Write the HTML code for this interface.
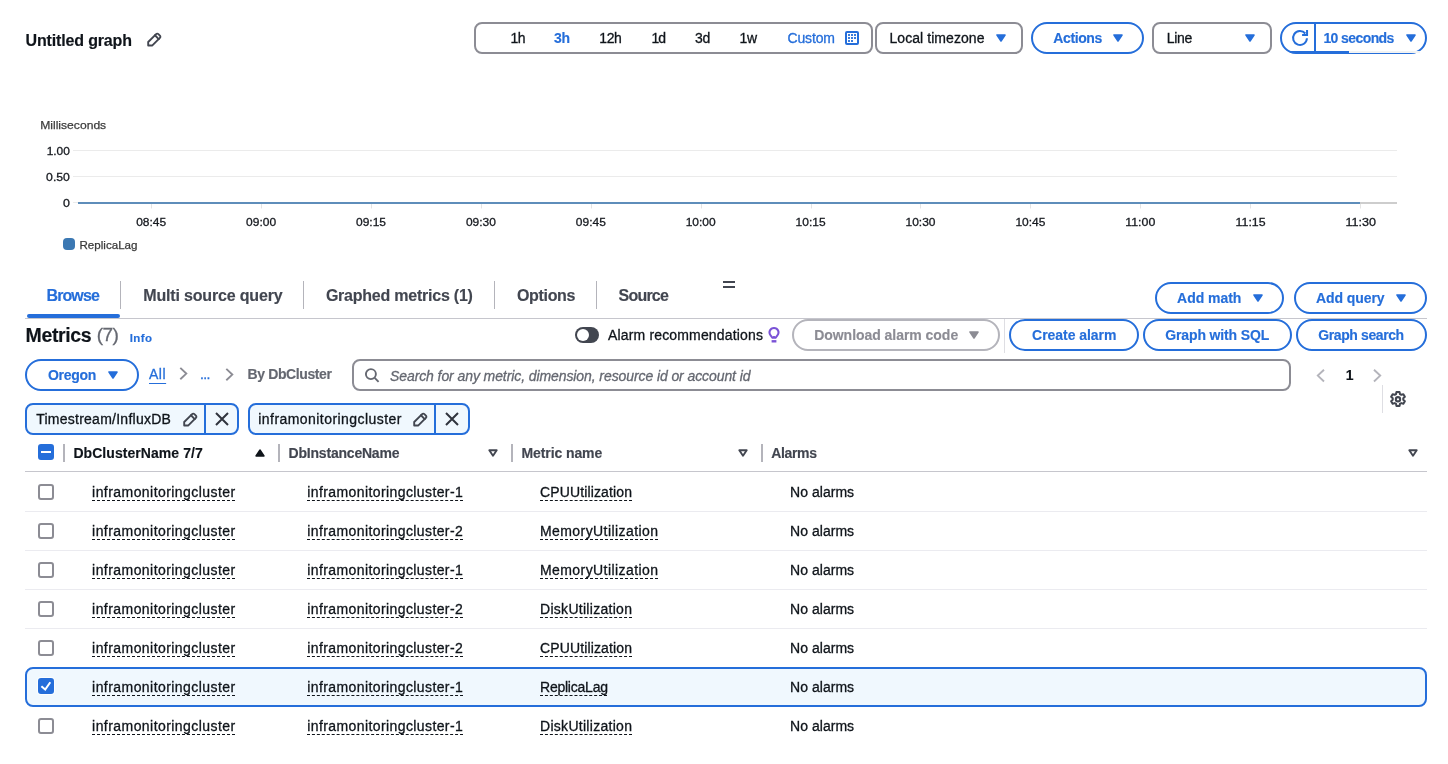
<!DOCTYPE html>
<html lang="en"><head>
<meta charset="utf-8">
<title>CloudWatch Metrics</title>
<style>
html,body{margin:0;padding:0}
body{width:1448px;height:764px;position:relative;overflow:hidden;background:#fff;font-family:"Liberation Sans",sans-serif;font-size:14px;line-height:20px;color:#0f141a;will-change:transform}
.t{position:absolute;white-space:nowrap;margin:0;padding:0;-webkit-text-stroke:0.3px currentColor}
.t.b{-webkit-text-stroke:0.15px currentColor}
.b{font-weight:700}
.blue{color:#256eda}
.g{color:#424650}
.g2{color:#656871}
.box{position:absolute;box-sizing:border-box;border:2px solid #8c8c94;border-radius:8px;height:32px;background:#fff}
.pill{position:absolute;box-sizing:border-box;border:2px solid #256eda;border-radius:16px;height:32px;background:#fff}
.pill.dis{border-color:#b4b4bb}
.tok{position:absolute;box-sizing:border-box;border:2px solid #256eda;border-radius:8px;height:32px;background:#f0f8fe}
.vl{position:absolute;background:#b4b4bb}
.hl{position:absolute;height:1px;background:#ebebf0;left:25px;width:1402px}
.cb{position:absolute;box-sizing:border-box;width:16px;height:16px;left:38px;border:2px solid #8c8c94;border-radius:3px;background:#fff}
.cb.on{border-color:#256eda;background:#256eda}
.ic{position:absolute;overflow:visible}
.u{text-decoration:underline dashed;text-decoration-thickness:1px;text-underline-offset:3px}
</style>
</head>
<body>
<!-- HEADER -->
<header id="hdr">
<h1 class="t b" style="left: 25.5px; top: 31px; font-size: 16px; line-height: 20px; letter-spacing: -0.15px;">Untitled graph</h1>
<svg class="ic" style="left:146px;top:32px" width="16" height="16" viewBox="0 0 16 16" fill="none" stroke="#424650" stroke-width="1.9" stroke-linejoin="round" stroke-linecap="round"><path d="M2.2 13.45V10.04L10.115 2.125A1.6 1.6 0 0 1 12.378 2.125L13.905 3.652A1.6 1.6 0 0 1 13.905 5.915L6.37 13.45Z"></path><path d="M8.95 3.29l3.79 3.79"></path></svg>

<div class="box" style="left:474px;top:22px;width:399px"></div>
<span class="t" style="left: 510.5px; top: 28px; letter-spacing: -0.58px;">1h</span>
<span class="t b blue" style="left: 554px; top: 28px; letter-spacing: -0.34px;">3h</span>
<span class="t" style="left: 599.3px; top: 28px; letter-spacing: -0.43px;">12h</span>
<span class="t" style="left: 651.5px; top: 28px; letter-spacing: -1.08px;">1d</span>
<span class="t" style="left: 695px; top: 28px; letter-spacing: -0.38px;">3d</span>
<span class="t" style="left: 739.4px; top: 28px; letter-spacing: -0.21px;">1w</span>
<span class="t blue" style="left: 787.5px; top: 28px; letter-spacing: -0.15px;">Custom</span>
<svg class="ic" style="left:845px;top:31px" width="14" height="14" viewBox="0 0 14 14"><rect x="1" y="1" width="12" height="12" rx="1" fill="none" stroke="#256eda" stroke-width="2"></rect><g fill="#256eda"><rect x="3.05" y="3.05" width="1.9" height="1.9"></rect><rect x="6.05" y="3.05" width="1.9" height="1.9"></rect><rect x="9.05" y="3.05" width="1.9" height="1.9"></rect><rect x="3.05" y="6.05" width="1.9" height="1.9"></rect><rect x="6.05" y="6.05" width="1.9" height="1.9"></rect><rect x="9.05" y="6.05" width="1.9" height="1.9"></rect><rect x="3.05" y="9.05" width="1.9" height="1.9"></rect><rect x="6.05" y="9.05" width="1.9" height="1.9"></rect></g></svg>

<div class="box" style="left:875px;top:22px;width:148px"></div>
<span class="t" style="left: 889.5px; top: 28px; letter-spacing: 0.06px;">Local timezone</span>
<svg class="ic car" style="left:996px;top:34px" width="10" height="8" viewBox="0 0 10 8"><path d="M1 1h8L5 7z" fill="#256eda" stroke="#256eda" stroke-width="1.6" stroke-linejoin="round"></path></svg>

<div class="pill" style="left:1031px;top:22px;width:113px"></div>
<span class="t b blue" style="left: 1053.3px; top: 28px; letter-spacing: -0.39px;">Actions</span>
<svg class="ic car" style="left:1113px;top:34px" width="10" height="8" viewBox="0 0 10 8"><path d="M1 1h8L5 7z" fill="#256eda" stroke="#256eda" stroke-width="1.6" stroke-linejoin="round"></path></svg>

<div class="box" style="left:1152px;top:22px;width:120px"></div>
<span class="t" style="left: 1166.8px; top: 28px; letter-spacing: -0.32px;">Line</span>
<svg class="ic car" style="left:1245px;top:34px" width="10" height="8" viewBox="0 0 10 8"><path d="M1 1h8L5 7z" fill="#256eda" stroke="#256eda" stroke-width="1.6" stroke-linejoin="round"></path></svg>

<div class="pill" style="left:1280px;top:22px;width:147px"></div>
<div style="position:absolute;left:1290px;top:51px;width:130px;height:2px;background:linear-gradient(to right,#256eda 0,#256eda 59px,#f2f3f3 59px,#f2f3f3 100%)"></div>
<div class="vl" style="left:1314px;top:23px;width:2px;height:30px;background:#256eda"></div>
<svg class="ic" style="left:1292px;top:30px" width="16" height="16" viewBox="0 0 16 16" fill="none" stroke="#256eda" stroke-width="2" stroke-linejoin="round" stroke-linecap="butt"><path d="M14.95 8.3A6.95 6.95 0 1 1 13.3 3.5"></path><path d="M15.05 0.1V4.97H10.1" stroke-linejoin="miter"></path></svg>
<span class="t b blue" style="left: 1323.4px; top: 28px; letter-spacing: -0.59px;">10 seconds</span>
<svg class="ic car" style="left:1406px;top:34px" width="10" height="8" viewBox="0 0 10 8"><path d="M1 1h8L5 7z" fill="#256eda" stroke="#256eda" stroke-width="1.6" stroke-linejoin="round"></path></svg>
</header>

<!-- CHART -->
<svg class="ic" id="chart" style="left:0;top:100px" width="1448" height="160" viewBox="0 100 1448 160" font-family="Liberation Sans, sans-serif" font-size="11.5">
<g stroke="#ebebeb" stroke-width="1"><path d="M73 150.5H1397M73 176.5H1397M73 202.5H1397"></path></g>
<g stroke="#e4e4e4" stroke-width="1"><path d="M151.5 204v4.5M261.5 204v4.5M371.5 204v4.5M481.5 204v4.5M591.5 204v4.5M701.5 204v4.5M811.5 204v4.5M920.5 204v4.5M1030.5 204v4.5M1140.5 204v4.5M1250.5 204v4.5M1360.5 204v4.5"></path></g>
<path d="M1360 203H1397" stroke="#cdcdcd" stroke-width="2"></path>
<path d="M78 203H1360" stroke="#5e8dba" stroke-width="2"></path>
<text x="40.2" y="129" fill="#3c3c3c" stroke="#3c3c3c" stroke-width="0.25" textLength="66" lengthAdjust="spacingAndGlyphs">Milliseconds</text>
<g fill="#16191f" stroke="#16191f" stroke-width="0.3">
<text x="46.7" y="155.3" textLength="23.2" lengthAdjust="spacingAndGlyphs">1.00</text>
<text x="46.1" y="181.3" textLength="23.8" lengthAdjust="spacingAndGlyphs">0.50</text>
<text x="63" y="206.8" textLength="6.9" lengthAdjust="spacingAndGlyphs">0</text>
<text x="136.2" y="226" textLength="30" lengthAdjust="spacingAndGlyphs">08:45</text>
<text x="246.1" y="226" textLength="30" lengthAdjust="spacingAndGlyphs">09:00</text>
<text x="356" y="226" textLength="30" lengthAdjust="spacingAndGlyphs">09:15</text>
<text x="465.9" y="226" textLength="30" lengthAdjust="spacingAndGlyphs">09:30</text>
<text x="575.8" y="226" textLength="30" lengthAdjust="spacingAndGlyphs">09:45</text>
<text x="685.7" y="226" textLength="30" lengthAdjust="spacingAndGlyphs">10:00</text>
<text x="795.6" y="226" textLength="30" lengthAdjust="spacingAndGlyphs">10:15</text>
<text x="905.5" y="226" textLength="30" lengthAdjust="spacingAndGlyphs">10:30</text>
<text x="1015.4" y="226" textLength="30" lengthAdjust="spacingAndGlyphs">10:45</text>
<text x="1125.3" y="226" textLength="30" lengthAdjust="spacingAndGlyphs">11:00</text>
<text x="1235.6" y="226" textLength="30" lengthAdjust="spacingAndGlyphs">11:15</text>
<text x="1345.5" y="226" textLength="30.5" lengthAdjust="spacingAndGlyphs">11:30</text>
</g>
<rect x="63" y="238" width="12" height="12" rx="4" fill="#3b78b3"></rect>
<text x="79.5" y="248.7" fill="#3a3a3a" stroke="#3a3a3a" stroke-width="0.25" textLength="58" lengthAdjust="spacingAndGlyphs">ReplicaLag</text>
</svg>

<!-- TABS -->
<nav id="tabs">
<div class="hl" style="top:318px;background:#c6c6cd"></div>
<div style="position:absolute;left:27px;top:314px;width:93px;height:4px;border-radius:2px;background:#256eda"></div>
<span class="t b blue" style="left: 46.5px; top: 286px; font-size: 16px; letter-spacing: -0.9px;">Browse</span>
<div class="vl" style="left:120px;top:281px;width:1px;height:28px"></div>
<span class="t b g" style="left: 143.3px; top: 286px; font-size: 16px; letter-spacing: -0.17px;">Multi source query</span>
<div class="vl" style="left:303px;top:281px;width:1px;height:28px"></div>
<span class="t b g" style="left: 325.9px; top: 286px; font-size: 16px; letter-spacing: -0.23px;">Graphed metrics (1)</span>
<div class="vl" style="left:494px;top:281px;width:1px;height:28px"></div>
<span class="t b g" style="left: 516.9px; top: 286px; font-size: 16px; letter-spacing: -0.31px;">Options</span>
<div class="vl" style="left:596px;top:281px;width:1px;height:28px"></div>
<span class="t b g" style="left: 618.6px; top: 286px; font-size: 16px; letter-spacing: -0.81px;">Source</span>
<div style="position:absolute;left:723px;top:281px;width:12px;height:2px;background:#424650"></div>
<div style="position:absolute;left:723px;top:286px;width:12px;height:2px;background:#424650"></div>

<div class="pill" style="left:1155px;top:282px;width:129px"></div>
<span class="t b blue" style="left: 1177.1px; top: 288px; letter-spacing: -0.04px;">Add math</span>
<svg class="ic car" style="left:1253px;top:294px" width="10" height="8" viewBox="0 0 10 8"><path d="M1 1h8L5 7z" fill="#256eda" stroke="#256eda" stroke-width="1.6" stroke-linejoin="round"></path></svg>
<div class="pill" style="left:1294px;top:282px;width:133px"></div>
<span class="t b blue" style="left: 1316.1px; top: 288px; letter-spacing: -0.09px;">Add query</span>
<svg class="ic car" style="left:1396px;top:294px" width="10" height="8" viewBox="0 0 10 8"><path d="M1 1h8L5 7z" fill="#256eda" stroke="#256eda" stroke-width="1.6" stroke-linejoin="round"></path></svg>
</nav>

<!-- METRICS HEADER -->
<section id="mh">
<h2 class="t b" style="left: 25.6px; top: 324px; font-size: 19.5px; line-height: 22px; letter-spacing: -0.38px;">Metrics</h2>
<span class="t g2" style="left: 96.8px; top: 324px; font-size: 19px; line-height: 22px; letter-spacing: -0.62px;">(7)</span>
<span class="t b blue" style="left: 129.8px; top: 329px; font-size: 11.5px; line-height: 18px; letter-spacing: 0.37px;">Info</span>
<div style="position:absolute;left:575px;top:327px;width:24px;height:16px;border-radius:8px;background:#424650"><div style="position:absolute;left:2px;top:2px;width:12px;height:12px;border-radius:6px;background:#fff"></div></div>
<span class="t" style="left: 608px; top: 325px; letter-spacing: 0.16px;">Alarm recommendations</span>
<svg class="ic" style="left:766px;top:325px" width="16" height="18" viewBox="0 0 16 18" fill="none" stroke="#7a52d6" stroke-width="2" stroke-linejoin="round"><path d="M8 2.9a4.5 4.5 0 0 1 3.4 7.45L9.5 12.8H6.5L4.6 10.35A4.5 4.5 0 0 1 8 2.9z"></path><path d="M6.9 11.9h2.2" stroke-width="1.6"></path><path d="M5.6 16.3h4.8" stroke-width="2.4"></path></svg>
<div class="pill dis" style="left:792px;top:319px;width:208px"></div>
<span class="t b" style="left: 814.2px; top: 325px; color: rgb(140, 140, 148); letter-spacing: -0.04px;">Download alarm code</span>
<svg class="ic car" style="left:969px;top:331px" width="10" height="8" viewBox="0 0 10 8"><path d="M1 1h8L5 7z" fill="#8c8c94" stroke="#8c8c94" stroke-width="1.6" stroke-linejoin="round"></path></svg>
<div class="vl" style="left:1004px;top:319px;width:1px;height:34px;background:#dedee3"></div>
<div class="pill" style="left:1009px;top:319px;width:130px"></div>
<span class="t b blue" style="left: 1032.1px; top: 325px; letter-spacing: -0.05px;">Create alarm</span>
<div class="pill" style="left:1143px;top:319px;width:149px"></div>
<span class="t b blue" style="left: 1165.3px; top: 325px; letter-spacing: -0.14px;">Graph with SQL</span>
<div class="pill" style="left:1296px;top:319px;width:131px"></div>
<span class="t b blue" style="left: 1318.3px; top: 325px; letter-spacing: -0.4px;">Graph search</span>
</section>

<!-- FILTER ROW -->
<section id="flt">
<div class="pill" style="left:25px;top:359px;width:114px"></div>
<span class="t b blue" style="left: 48px; top: 365px; letter-spacing: -0.32px;">Oregon</span>
<svg class="ic car" style="left:108px;top:371px" width="10" height="8" viewBox="0 0 10 8"><path d="M1 1h8L5 7z" fill="#256eda" stroke="#256eda" stroke-width="1.6" stroke-linejoin="round"></path></svg>
<span class="t blue" style="left: 149px; top: 364px; text-decoration: underline; text-underline-offset: 4px; letter-spacing: 0.52px;">All</span>
<svg class="ic" style="left:179.4px;top:367px" width="9" height="13" viewBox="0 0 9 13" fill="none" stroke="#8c8c94" stroke-width="1.9"><path d="M1.3 .9l6 5.7-6 5.7"></path></svg>
<span class="t blue" style="left: 200px; top: 364px; letter-spacing: -0.64px;">...</span>
<svg class="ic" style="left:224.6px;top:367.6px" width="9" height="13" viewBox="0 0 9 13" fill="none" stroke="#8c8c94" stroke-width="1.9"><path d="M1.3 .9l6 5.7-6 5.7"></path></svg>
<span class="t b g2" style="left: 247.6px; top: 364px; letter-spacing: -0.4px;">By DbCluster</span>
<div class="box" style="left:352px;top:359px;width:939px"></div>
<svg class="ic" style="left:364px;top:367px" width="16" height="16" viewBox="0 0 16 16" fill="none" stroke="#656871" stroke-width="1.9" stroke-linecap="butt"><circle cx="6.9" cy="7.1" r="5"></circle><path d="M10.7 10.9l3.9 3.9"></path></svg>
<span class="t g2" style="left: 390px; top: 366px; font-style: italic; letter-spacing: -0.09px;">Search for any metric, dimension, resource id or account id</span>
<svg class="ic" style="left:1316.3px;top:368.9px" width="9" height="13" viewBox="0 0 9 13" fill="none" stroke="#b4b4bb" stroke-width="1.9"><path d="M8 .7L1.8 6.6 8 12.5"></path></svg>
<span class="t b" style="left: 1345.7px; top: 365px; letter-spacing: -1.1px;">1</span>
<svg class="ic" style="left:1373px;top:368.7px" width="9" height="13" viewBox="0 0 9 13" fill="none" stroke="#b4b4bb" stroke-width="1.9"><path d="M1 .7l6.2 5.9L1 12.5"></path></svg>
<div class="vl" style="left:1382px;top:385px;width:1px;height:28px;background:#dedee3"></div>
<svg class="ic" style="left:1390px;top:391px" width="16" height="16" viewBox="0 0 16 16" fill="none" stroke="#424650" stroke-width="1.9" stroke-linejoin="round"><g transform="translate(8 8.3) scale(1.08) translate(-8 -8)"><path d="M6.6 1.2h2.8l.4 1.9 1.3.75 1.85-.6 1.4 2.4-1.45 1.3v1.5l1.45 1.3-1.4 2.4-1.85-.6-1.3.75-.4 1.9H6.6l-.4-1.9-1.3-.75-1.85.6-1.4-2.4 1.45-1.3v-1.5L1.65 5.65l1.4-2.4 1.85.6 1.3-.75z"></path><circle cx="8" cy="8" r="2"></circle></g></svg>

<div class="tok" style="left:25px;top:403px;width:214px"></div>
<span class="t" style="left: 36.2px; top: 409px; letter-spacing: 0.25px;">Timestream/InfluxDB</span>
<svg class="ic" style="left:182.1px;top:412.3px" width="16" height="16" viewBox="0 0 16 16" fill="none" stroke="#424650" stroke-width="1.9" stroke-linejoin="round" stroke-linecap="round"><path d="M2.2 13.45V10.04L10.115 2.125A1.6 1.6 0 0 1 12.378 2.125L13.905 3.652A1.6 1.6 0 0 1 13.905 5.915L6.37 13.45Z"></path><path d="M8.95 3.29l3.79 3.79"></path></svg>
<div class="vl" style="left:204px;top:404px;width:2px;height:30px;background:#256eda"></div>
<svg class="ic" style="left:215px;top:412.2px" width="14" height="14" viewBox="0 0 14 14" fill="none" stroke="#30343e" stroke-width="2"><path d="M1 1l12 12M13 1L1 13"></path></svg>

<div class="tok" style="left:248px;top:403px;width:222px"></div>
<span class="t" style="left: 258.3px; top: 409px; letter-spacing: 0.44px;">inframonitoringcluster</span>
<svg class="ic" style="left:411.6px;top:412.3px" width="16" height="16" viewBox="0 0 16 16" fill="none" stroke="#424650" stroke-width="1.9" stroke-linejoin="round" stroke-linecap="round"><path d="M2.2 13.45V10.04L10.115 2.125A1.6 1.6 0 0 1 12.378 2.125L13.905 3.652A1.6 1.6 0 0 1 13.905 5.915L6.37 13.45Z"></path><path d="M8.95 3.29l3.79 3.79"></path></svg>
<div class="vl" style="left:434px;top:404px;width:2px;height:30px;background:#256eda"></div>
<svg class="ic" style="left:445px;top:412.2px" width="14" height="14" viewBox="0 0 14 14" fill="none" stroke="#30343e" stroke-width="2"><path d="M1 1l12 12M13 1L1 13"></path></svg>
</section>

<!-- TABLE -->
<section id="tbl">
<div class="cb on" style="top:444px"><div style="position:absolute;left:1px;top:5px;width:10px;height:2px;background:#fff"></div></div>
<div class="vl" style="left:63px;top:444px;width:2px;height:18px"></div>
<span class="t b" style="left: 73.4px; top: 443px; letter-spacing: 0.06px;">DbClusterName 7/7</span>
<svg class="ic" style="left:255px;top:449px" width="10" height="8" viewBox="0 0 10 8"><path d="M1 7h8L5 1z" fill="#0f141a" stroke="#0f141a" stroke-width="1.4" stroke-linejoin="round"></path></svg>
<div class="vl" style="left:278px;top:444px;width:2px;height:18px"></div>
<span class="t b g" style="left: 288.6px; top: 443px; letter-spacing: -0.21px;">DbInstanceName</span>
<svg class="ic" style="left:488px;top:449px" width="10" height="8" viewBox="0 0 10 8"><path d="M1.3 1.2h7.4L5 6.8z" fill="none" stroke="#424650" stroke-width="1.9" stroke-linejoin="round"></path></svg>
<div class="vl" style="left:511px;top:444px;width:2px;height:18px"></div>
<span class="t b g" style="left: 521.5px; top: 443px; letter-spacing: -0.1px;">Metric name</span>
<svg class="ic" style="left:738px;top:449px" width="10" height="8" viewBox="0 0 10 8"><path d="M1.3 1.2h7.4L5 6.8z" fill="none" stroke="#424650" stroke-width="1.9" stroke-linejoin="round"></path></svg>
<div class="vl" style="left:761px;top:444px;width:2px;height:18px"></div>
<span class="t b g" style="left: 771.3px; top: 443px; letter-spacing: -0.37px;">Alarms</span>
<svg class="ic" style="left:1408px;top:449px" width="10" height="8" viewBox="0 0 10 8"><path d="M1.3 1.2h7.4L5 6.8z" fill="none" stroke="#424650" stroke-width="1.9" stroke-linejoin="round"></path></svg>
<div class="hl" style="top:471px;background:#c6c6cd"></div>

<div style="position:absolute;box-sizing:border-box;left:25px;top:667px;width:1402px;height:40px;border:2px solid #256eda;border-radius:8px;background:#f0f8fe"></div>
<div class="hl" style="top:511px"></div>
<div class="hl" style="top:550px"></div>
<div class="hl" style="top:589px"></div>
<div class="hl" style="top:628px"></div>

<div class="cb" style="top:484px"></div>
<span class="t u" style="left: 92.1px; top: 482px; letter-spacing: 0.44px;">inframonitoringcluster</span>
<span class="t u" style="left: 307.3px; top: 482px; letter-spacing: 0.4px;">inframonitoringcluster-1</span>
<span class="t u" style="left: 540px; top: 482px; letter-spacing: 0.13px;">CPUUtilization</span>
<span class="t" style="left: 790px; top: 482px; letter-spacing: 0.04px;">No alarms</span>
<div class="cb" style="top:523px"></div>
<span class="t u" style="left: 92.1px; top: 521px; letter-spacing: 0.44px;">inframonitoringcluster</span>
<span class="t u" style="left: 307.3px; top: 521px; letter-spacing: 0.4px;">inframonitoringcluster-2</span>
<span class="t u" style="left: 540px; top: 521px; letter-spacing: 0.42px;">MemoryUtilization</span>
<span class="t" style="left: 790px; top: 521px; letter-spacing: 0.04px;">No alarms</span>
<div class="cb" style="top:562px"></div>
<span class="t u" style="left: 92.1px; top: 560px; letter-spacing: 0.44px;">inframonitoringcluster</span>
<span class="t u" style="left: 307.3px; top: 560px; letter-spacing: 0.4px;">inframonitoringcluster-1</span>
<span class="t u" style="left: 540px; top: 560px; letter-spacing: 0.42px;">MemoryUtilization</span>
<span class="t" style="left: 790px; top: 560px; letter-spacing: 0.04px;">No alarms</span>
<div class="cb" style="top:601px"></div>
<span class="t u" style="left: 92.1px; top: 599px; letter-spacing: 0.44px;">inframonitoringcluster</span>
<span class="t u" style="left: 307.3px; top: 599px; letter-spacing: 0.4px;">inframonitoringcluster-2</span>
<span class="t u" style="left: 540px; top: 599px; letter-spacing: 0.29px;">DiskUtilization</span>
<span class="t" style="left: 790px; top: 599px; letter-spacing: 0.04px;">No alarms</span>
<div class="cb" style="top:640px"></div>
<span class="t u" style="left: 92.1px; top: 638px; letter-spacing: 0.44px;">inframonitoringcluster</span>
<span class="t u" style="left: 307.3px; top: 638px; letter-spacing: 0.4px;">inframonitoringcluster-2</span>
<span class="t u" style="left: 540px; top: 638px; letter-spacing: 0.13px;">CPUUtilization</span>
<span class="t" style="left: 790px; top: 638px; letter-spacing: 0.04px;">No alarms</span>
<div class="cb on" style="top:678px;box-shadow:0 0 0 1px rgba(255,255,255,.85)"><svg class="ic" style="left:-2px;top:-2px" width="16" height="16" viewBox="0 0 16 16" fill="none" stroke="#fff" stroke-width="2" stroke-linejoin="miter"><path d="M3.4 8.3l3.8 3.3 5.1-7.3"></path></svg></div>
<span class="t u" style="left: 92.1px; top: 677px; letter-spacing: 0.44px;">inframonitoringcluster</span>
<span class="t u" style="left: 307.3px; top: 677px; letter-spacing: 0.4px;">inframonitoringcluster-1</span>
<span class="t u" style="left: 540px; top: 677px; letter-spacing: -0.23px;">ReplicaLag</span>
<span class="t" style="left: 790px; top: 677px; letter-spacing: 0.04px;">No alarms</span>
<div class="cb" style="top:718px"></div>
<span class="t u" style="left: 92.1px; top: 716px; letter-spacing: 0.44px;">inframonitoringcluster</span>
<span class="t u" style="left: 307.3px; top: 716px; letter-spacing: 0.4px;">inframonitoringcluster-1</span>
<span class="t u" style="left: 540px; top: 716px; letter-spacing: 0.29px;">DiskUtilization</span>
<span class="t" style="left: 790px; top: 716px; letter-spacing: 0.04px;">No alarms</span>
</section>


</body></html>
